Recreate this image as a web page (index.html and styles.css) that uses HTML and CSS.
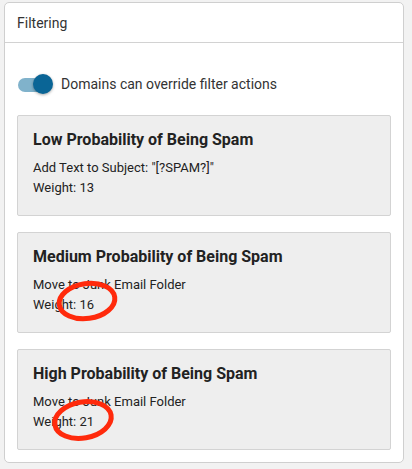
FILE: index.html
```html
<!DOCTYPE html>
<html>
<head>
<meta charset="utf-8">
<link rel="stylesheet" href="styles.css">
</head>
<body>
<section class="panel">
  <header class="panel-head">Filtering</header>
  <div class="panel-body">
    <label class="toggle-row">
      <span class="switch"><span class="track"></span><span class="knob"></span></span>
      <span class="toggle-label">Domains can override filter actions</span>
    </label>
    <div class="rule">
      <h3 class="rule-title">Low Probability of Being Spam</h3>
      <p class="rule-line">Add Text to Subject: "[?SPAM?]"</p>
      <p class="rule-line">Weight: 13</p>
    </div>
    <div class="rule">
      <h3 class="rule-title">Medium Probability of Being Spam</h3>
      <p class="rule-line">Move to Junk Email Folder</p>
      <p class="rule-line">Weight: 16</p>
      <svg class="mark mark-a" width="70" height="48" viewBox="0 0 70 48"><ellipse cx="35" cy="24" rx="28" ry="17.5" transform="rotate(-8 35 24)"/></svg>
    </div>
    <div class="rule">
      <h3 class="rule-title">High Probability of Being Spam</h3>
      <p class="rule-line">Move to Junk Email Folder</p>
      <p class="rule-line">Weight: 21</p>
      <svg class="mark mark-b" width="70" height="48" viewBox="0 0 70 48"><ellipse cx="35" cy="24" rx="28.5" ry="18" transform="rotate(-10 35 24)"/></svg>
    </div>
  </div>
</section>
</body>
</html>
```
FILE: styles.css
```css
html, body {
  margin: 0;
  padding: 0;
  background: #f2f2f2;
}
body {
  padding: 2px 8px 6px 4px;
  font-family: Roboto, "Liberation Sans", sans-serif;
  color: #222;
}
.panel {
  width: 400px;
  box-sizing: border-box;
  background: #fff;
  border: 1px solid #cfcfcf;
  border-radius: 5px;
}
.panel-head {
  height: 39px;
  box-sizing: content-box;
  padding: 0 12px;
  display: flex;
  align-items: center;
  font-size: 14px;
  color: #333;
  border-bottom: 1px solid #d2d2d2;
}
.panel-body {
  padding: 12px;
  display: flex;
  flex-direction: column;
  gap: 16px;
}
.toggle-row {
  display: flex;
  align-items: center;
  gap: 8px;
  height: 20px;
  margin: 19px 0 5px;
  font-size: 14px;
  color: #333;
}
.switch {
  position: relative;
  width: 36px;
  height: 20px;
  flex: none;
}
.track {
  position: absolute;
  left: 1px;
  top: 4px;
  width: 34px;
  height: 14px;
  border-radius: 7px;
  background: #80b2cb;
}
.knob {
  position: absolute;
  left: 16px;
  top: 0;
  width: 20px;
  height: 20px;
  border-radius: 50%;
  background: #0a6596;
  box-shadow: 0 1px 3px rgba(0,0,0,0.35);
}
.rule {
  position: relative;
  background: #eeeeee;
  border: 1px solid #d3d3d3;
  border-radius: 2px;
  padding: 14px 15px 17px;
}
.rule-title {
  margin: 0 0 8px;
  font-size: 16px;
  line-height: 20px;
  font-weight: 700;
  color: #222;
}
.rule-line {
  margin: 0;
  font-size: 13px;
  line-height: 20px;
  color: #222;
}
.mark {
  position: absolute;
  fill: none;
  stroke: #ff2a0c;
  stroke-width: 5;
}
.mark-a {
  left: 34px;
  top: 44px;
}
.mark-b {
  left: 30px;
  top: 46px;
}
```
